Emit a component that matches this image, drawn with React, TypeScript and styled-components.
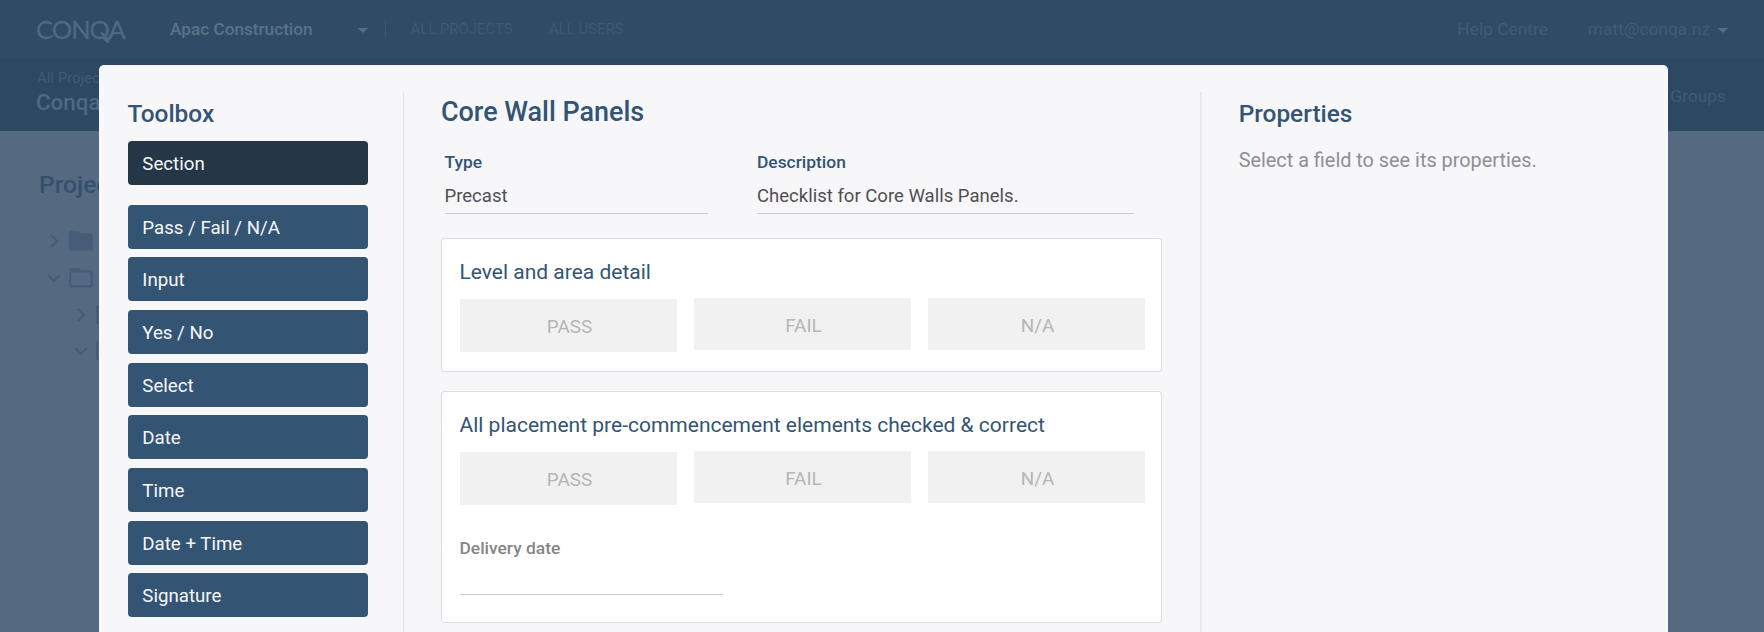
import React from 'react';
import styled, { createGlobalStyle } from 'styled-components';

const GlobalStyle = createGlobalStyle`
  * { box-sizing: border-box; }
  body {
    margin: 0;
    overflow: hidden;
    background: #556a80;
    font-family: Roboto, "Liberation Sans", sans-serif;
  }
`;

const Page = styled.div`
  position: relative;
  height: 632px;
  overflow: hidden;
`;

const TopBar = styled.header`
  display: flex;
  align-items: center;
  height: 59px;
  padding: 0 36px 1px 36px;
  background: #2f4b66;
  color: #405b76;
  font-size: 17.35px;
  line-height: 58px;
  white-space: nowrap;
`;

const Logo = styled.div`
  position: relative;
  width: 134px;
  color: #4e6982;
  font-family: Lato, Roboto, sans-serif;
  font-size: 25.4px;
  line-height: 58px;
  letter-spacing: -0.9px;
  -webkit-text-stroke: 0.3px #4e6982;
`;

const LogoTail = styled.svg`
  position: absolute;
  left: 62px;
  top: 30px;
`;

const Company = styled.div`
  display: flex;
  align-items: center;
  justify-content: space-between;
  width: 216px;
  height: 17px;
  padding-right: 17px;
  border-right: 1px solid #3c5771;
  color: #5a7288;
  font-size: 17.2px;
  font-weight: 500;
  line-height: 17px;
`;

const Caret = styled.span`
  width: 0;
  height: 0;
  margin-top: 2px;
  border: 5px solid transparent;
  border-top-color: #546d84;
  border-bottom: 0;
`;

const NavLink = styled.a`
  margin-left: 24.5px;
  font-size: 14.9px;
  color: #3e5972;

  & + & { margin-left: 36.5px; }
`;

const Account = styled.div`
  display: flex;
  align-items: center;
  gap: 8px;
  margin-left: 40px;
`;

const Spacer = styled.div`
  flex: 1;
`;

const SubBar = styled.div`
  display: flex;
  justify-content: space-between;
  height: 72px;
  padding: 9px 38px 0 36px;
  background: #2c4863;
  color: #405b76;
`;

const Crumb = styled.div`
  padding-left: 1px;
  font-size: 14.9px;
  line-height: 20px;
`;

const ProjectName = styled.div`
  color: #4f6982;
  font-size: 22.4px;
  font-weight: 500;
  line-height: 28px;
`;

const GroupsLink = styled.a`
  padding-top: 18px;
  font-size: 17.4px;
  line-height: 20px;
`;

const Tree = styled.main`
  padding: 39px 0 0 39px;
  color: #455d77;
`;

const TreeTitle = styled.h2`
  height: 53px;
  margin: 0;
  color: #34506d;
  font-size: 24.6px;
  font-weight: 500;
  line-height: 30px;
`;

const TreeRow = styled.div<{ $level: number }>`
  display: flex;
  align-items: center;
  gap: 7px;
  height: 36.7px;
  padding-left: ${(p) => 7.5 + p.$level * 27}px;
`;

const Modal = styled.section`
  position: absolute;
  left: 99px;
  top: 65px;
  display: flex;
  width: 1569px;
  height: 580px;
  padding-top: 27px;
  border-radius: 5px 5px 0 0;
  background: #f7f7fa;
  color: #335473;
`;

const ToolboxColumn = styled.aside`
  width: 305px;
  padding: 6px 35px 0 28.5px;
  border-right: 1px solid #e1e2e5;
`;

const ColumnTitle = styled.h2`
  height: 43px;
  margin: 0;
  font-size: 24.4px;
  font-weight: 500;
  line-height: 32px;
`;

const Tool = styled.button<{ $dark?: boolean }>`
  display: block;
  width: 100%;
  height: 44px;
  margin: 0 0 ${(p) => (p.$dark ? 19.8 : 8.65)}px;
  padding: 2px 15px 0 14.8px;
  border: 0;
  border-radius: 4px;
  background: ${(p) => (p.$dark ? '#253647' : '#345473')};
  color: #f4f7fa;
  font: 400 18.7px Roboto, sans-serif;
  text-align: left;
`;

const FormColumn = styled.main`
  width: 798px;
  padding: 3px 38px 0 37px;
  border-right: 2px solid #e8e9ec;
`;

const FormTitle = styled.h1`
  height: 55px;
  margin: 0;
  font-size: 26.95px;
  font-weight: 500;
  line-height: 34px;
`;

const Fields = styled.div`
  display: flex;
  gap: 49.5px;
  height: 88px;
  padding-left: 3.5px;
`;

const Field = styled.label<{ $width: number }>`
  width: ${(p) => p.$width}px;
`;

const FieldLabel = styled.div<{ $muted?: boolean }>`
  color: ${(p) => (p.$muted ? '#858585' : '#335473')};
  font-size: 17.4px;
  font-weight: 500;
  line-height: 24px;
`;

const FieldValue = styled.div`
  height: 40px;
  border-bottom: 1px solid #cdcdd0;
  color: #4f4f51;
  font-size: 18.55px;
  line-height: 44px;
`;

const Card = styled.article<{ $height: number }>`
  height: ${(p) => p.$height}px;
  margin-bottom: 19px;
  padding: 18px 17px 0 17.5px;
  border: 1px solid #dcdde0;
  border-radius: 3px;
  background: #fff;
`;

const Question = styled.h3`
  height: 41px;
  margin: 0;
  font-size: 21px;
  font-weight: 400;
  line-height: 30px;
  white-space: nowrap;
`;

const Answers = styled.div`
  display: grid;
  grid-template-columns: 217px 217px 217px;
  gap: 17px;
`;

const Answer = styled.button`
  height: 52px;
  padding: 3px 0 0 3px;
  border: 0;
  background: #f1f1f1;
  color: #b5b5b5;
  font: 400 18.9px Roboto, sans-serif;

  &:first-child {
    height: 53px;
    margin: 1px 0 -2px;
    padding-top: 1px;
  }
`;

const DateField = styled.div`
  width: 263px;
  margin-top: 33px;
`;

const DateInput = styled.div`
  height: 35px;
  border-bottom: 1px solid #cfcfcf;
`;

const PropertiesColumn = styled.aside`
  padding: 6px 0 0 36.7px;
`;

const Hint = styled.p`
  margin: -7px 0 0;
  color: #8f8f92;
  font-size: 19.85px;
  line-height: 54px;
`;

function Chevron({ open = false }: { open?: boolean }) {
  return (
    <svg width="15" height="16" viewBox="0 0 15 16" fill="none" stroke="currentColor" strokeWidth="2">
      <path d={open ? 'M1 5l6 6 6-6' : 'M4 2l6 6-6 6'} />
    </svg>
  );
}

function Folder({ filled = false }: { filled?: boolean }) {
  const outline =
    'M2.5 0h7l2 2.2h10a2.5 2.5 0 0 1 2.5 2.5v12.3a2.5 2.5 0 0 1-2.5 2.5h-19a2.5 2.5 0 0 1-2.5-2.5v-14.5a2.5 2.5 0 0 1 2.5-2.5z';
  return (
    <svg width="24" height="20" viewBox="0 0 24 20">
      <path
        d={filled ? outline : `${outline}M2.2 4.6v12.7h19.6v-12.7z`}
        fill="currentColor"
        fillRule="evenodd"
      />
    </svg>
  );
}

const tools = ['Pass / Fail / N/A', 'Input', 'Yes / No', 'Select', 'Date', 'Time', 'Date + Time', 'Signature'];

function AnswerRow() {
  return (
    <Answers>
      <Answer>PASS</Answer>
      <Answer>FAIL</Answer>
      <Answer>N/A</Answer>
    </Answers>
  );
}

export default function App() {
  return (
    <Page>
      <GlobalStyle />
      <TopBar>
        <Logo>
          CONQA
          <LogoTail width="14" height="14" viewBox="0 0 14 14" fill="none" stroke="currentColor" strokeWidth="2.2">
            <path d="M3 2.5L10.5 10L12.5 5" />
          </LogoTail>
        </Logo>
        <Company>
          Apac Construction
          <Caret />
        </Company>
        <NavLink>ALL PROJECTS</NavLink>
        <NavLink>ALL USERS</NavLink>
        <Spacer />
        <span>Help Centre</span>
        <Account>
          matt@conqa.nz
          <Caret />
        </Account>
      </TopBar>
      <SubBar>
        <div>
          <Crumb>All Projects</Crumb>
          <ProjectName>Conqa</ProjectName>
        </div>
        <GroupsLink>Groups</GroupsLink>
      </SubBar>
      <Tree>
        <TreeTitle>Projects</TreeTitle>
        <TreeRow $level={0}><Chevron /><Folder filled /></TreeRow>
        <TreeRow $level={0}><Chevron open /><Folder /></TreeRow>
        <TreeRow $level={1}><Chevron /><Folder filled /></TreeRow>
        <TreeRow $level={1}><Chevron open /><Folder /></TreeRow>
      </Tree>

      <Modal>
        <ToolboxColumn>
          <ColumnTitle>Toolbox</ColumnTitle>
          <Tool $dark>Section</Tool>
          {tools.map((tool) => (
            <Tool key={tool}>{tool}</Tool>
          ))}
        </ToolboxColumn>
        <FormColumn>
          <FormTitle>Core Wall Panels</FormTitle>
          <Fields>
            <Field $width={263}>
              <FieldLabel>Type</FieldLabel>
              <FieldValue>Precast</FieldValue>
            </Field>
            <Field $width={377}>
              <FieldLabel>Description</FieldLabel>
              <FieldValue>Checklist for Core Walls Panels.</FieldValue>
            </Field>
          </Fields>
          <Card $height={134}>
            <Question>Level and area detail</Question>
            <AnswerRow />
          </Card>
          <Card $height={232}>
            <Question>All placement pre-commencement elements checked &amp; correct</Question>
            <AnswerRow />
            <DateField>
              <FieldLabel $muted>Delivery date</FieldLabel>
              <DateInput />
            </DateField>
          </Card>
        </FormColumn>
        <PropertiesColumn>
          <ColumnTitle>Properties</ColumnTitle>
          <Hint>Select a field to see its properties.</Hint>
        </PropertiesColumn>
      </Modal>
    </Page>
  );
}
